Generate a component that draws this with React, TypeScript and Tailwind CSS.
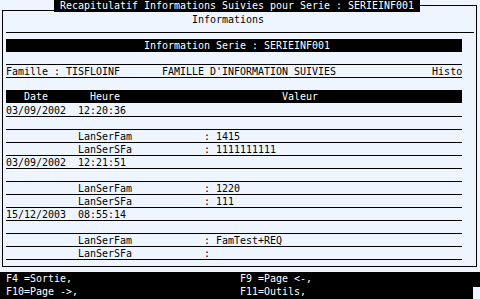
import React from "react";

function at(parts: [number, string][]): string {
  let s = "";
  for (const [pos, txt] of parts) {
    while (s.length < pos) s += " ";
    s += txt;
  }
  return s;
}

function Line({ text }: { text?: string }) {
  return (
    <div className="ml-[6px] w-[456px] h-[13px] leading-[13px] border-b border-black whitespace-pre">
      {text ?? ""}
    </div>
  );
}

function DateRow({ d, t }: { d: string; t: string }) {
  return <Line text={at([[0, d], [12, t]])} />;
}

function FieldRow({ name, value }: { name: string; value: string }) {
  return <Line text={at([[12, name], [33, ": " + value]])} />;
}

export default function App() {
  return (
    <div className="relative w-[480px] h-[299px] overflow-hidden bg-[#eef5ff] text-black font-['DejaVu_Sans_Mono',monospace] text-[9.97px]">
      {/* Row 0: title */}
      <div className="h-[13px]">
        <div className="ml-[54px] w-[366px] h-[12px] leading-[12px] bg-black text-white whitespace-pre">
          {" Recapitulatif Informations Suivies pour Serie : SERIEINF001 "}
        </div>
      </div>
      {/* Row 1 */}
      <div className="h-[13px] leading-[13px] pl-[192px] whitespace-pre">Informations</div>
      {/* Row 2: separator */}
      <div className="h-[13px] flex items-center">
        <div className="ml-[6px] w-[468px] h-px bg-black" />
      </div>
      {/* Row 3: black bar */}
      <div className="ml-[6px] w-[456px] h-[13px] leading-[13px] bg-black text-white whitespace-pre">
        {at([[23, "Information Serie : SERIEINF001"]])}
      </div>
      {/* Row 4 */}
      <Line />
      {/* Row 5 */}
      <Line text={at([[0, "Famille : TISFLOINF"], [26, "FAMILLE D'INFORMATION SUIVIES"], [71, "Histo"]])} />
      {/* Row 6 */}
      <div className="h-[12px]" />
      {/* Row 7: header */}
      <div className="ml-[6px] w-[456px] h-[13px] leading-[13px] bg-black text-white whitespace-pre">
        {at([[3, "Date"], [14, "Heure"], [46, "Valeur"]])}
      </div>
      <div className="h-px" />
      {/* Rows 8-19 */}
      <DateRow d="03/09/2002" t="12:20:36" />
      <Line />
      <FieldRow name="LanSerFam" value="1415" />
      <FieldRow name="LanSerSFa" value="1111111111" />
      <DateRow d="03/09/2002" t="12:21:51" />
      <Line />
      <FieldRow name="LanSerFam" value="1220" />
      <FieldRow name="LanSerSFa" value="111" />
      <DateRow d="15/12/2003" t="08:55:14" />
      <Line />
      <FieldRow name="LanSerFam" value="FamTest+REQ" />
      <FieldRow name="LanSerSFa" value="" />
      {/* Row 20 */}
      <div className="h-[12px]" />
      {/* Footer */}
      <div className="h-[27px] bg-black text-white">
        <div className="h-[13px] leading-[13px] pl-[6px] whitespace-pre">
          {at([[0, "F4 =Sortie,"], [39, "F9 =Page <-,"]])}
        </div>
        <div className="h-[14px] flex justify-between">
          <div className="leading-[13px] pl-[6px] whitespace-pre">
            {at([[0, "F10=Page ->,"], [39, "F11=Outils,"]])}
          </div>
          <div className="self-end w-[7px] h-[12px] bg-[#eef5ff]" />
        </div>
      </div>

      {/* Frame overlay */}
      <div className="absolute left-[2px] top-[10px] w-px h-[257px] bg-black" />
      <div className="absolute left-[2px] top-[10px] w-[52px] h-px bg-black" />
      <div className="absolute left-[420px] top-[5px] w-[57px] h-px bg-black" />
      <div className="absolute left-[476px] top-[5px] w-px h-[262px] bg-black" />
      <div className="absolute left-[2px] top-[266px] w-[475px] h-px bg-black" />
    </div>
  );
}
